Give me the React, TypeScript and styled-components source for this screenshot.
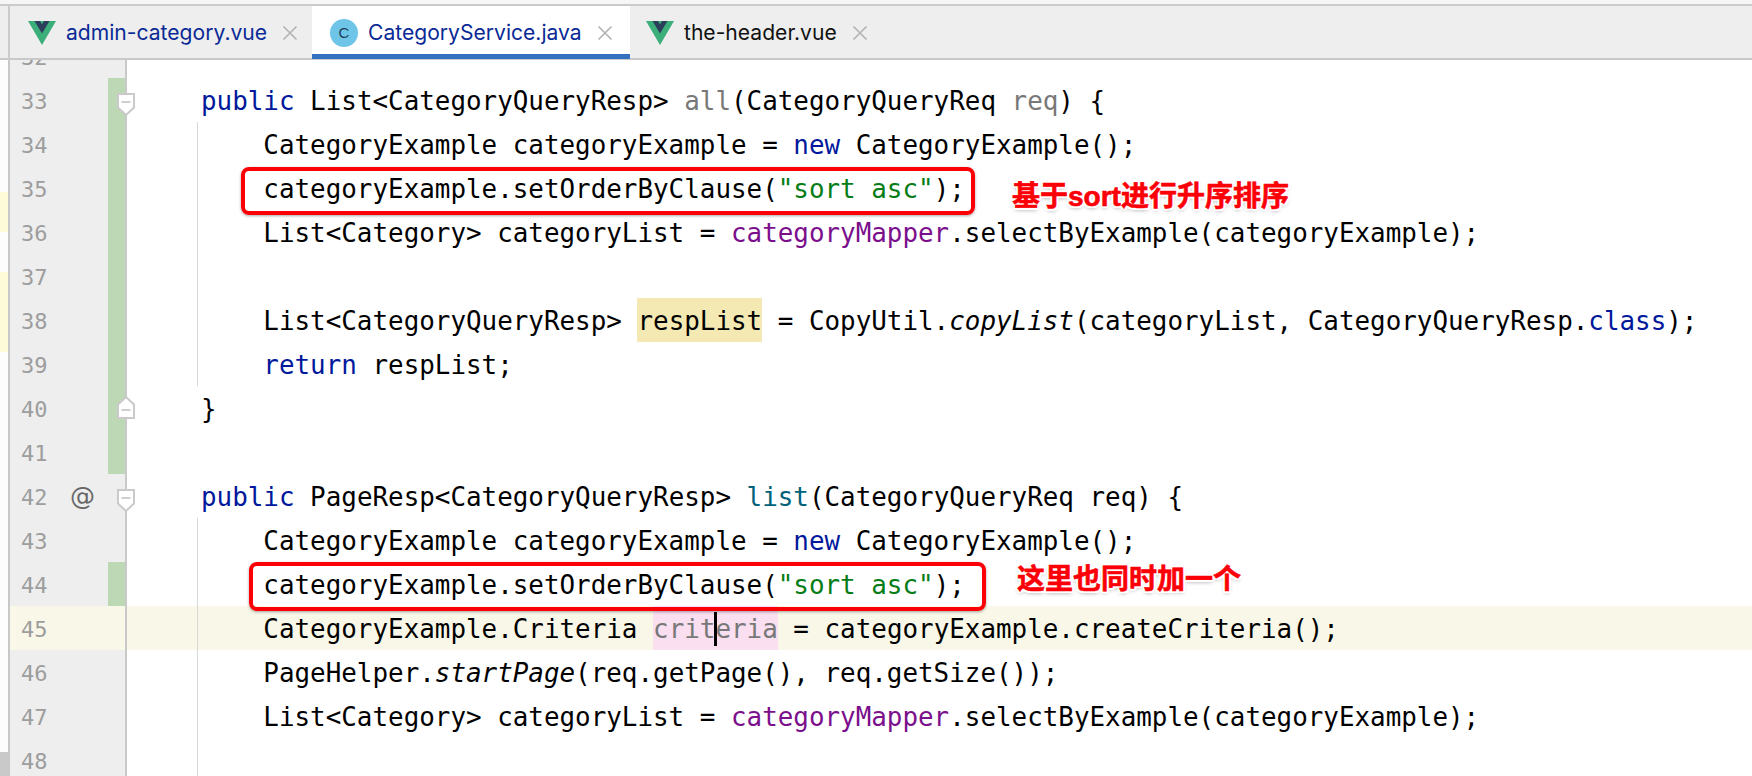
import React from "react";
import styled, { createGlobalStyle } from "styled-components";

const Global = createGlobalStyle`
  html, body { margin: 0; padding: 0; background: #fff; }
  #root { width: 1752px; height: 776px; overflow: hidden; }
`;

const Window = styled.div`
  position: relative;
  width: 1752px;
  height: 776px;
  overflow: hidden;
  display: flex;
  flex-direction: column;
  background: #fff;
`;
const TopStrip = styled.div`
  box-sizing: border-box;
  height: 6px;
  background: #f6f6f6;
  border-bottom: 2px solid #cbcbcb;
  flex: none;
`;
const TabBar = styled.div`
  box-sizing: border-box;
  height: 54px;
  flex: none;
  display: flex;
  background: #eeeeee;
  border-bottom: 2px solid #c9c9c9;
  padding-left: 8px;
  font-family: Inter, "Liberation Sans", sans-serif;
`;
const Tab = styled.div<{ $active?: boolean; $w: number; $pad: number; $first?: boolean }>`
  box-sizing: border-box;
  width: ${(p) => p.$w}px;
  height: 53px;
  display: flex;
  align-items: center;
  padding-left: ${(p) => p.$pad}px;
  background: ${(p) => (p.$active ? "#fff" : "transparent")};
  box-shadow: ${(p) => (p.$active ? "inset 0 -5px 0 #3470c0" : "none")};
  border-left: ${(p) => (p.$first ? "2px solid #cbcbcb" : "none")};
`;
const TabName = styled.span<{ $plain?: boolean }>`
  font-size: 21.1px;
  color: ${(p) => (p.$plain ? "#111" : "#0a2a96")};
  margin-left: 10px;
  white-space: nowrap;
`;
const CloseIcon = styled.svg`
  width: 16px;
  height: 16px;
  margin-left: 15px;
  flex: none;
`;
const ClassBadge = styled.span`
  width: 28px;
  height: 28px;
  border-radius: 50%;
  background: #6fc5e8;
  color: #1d3f5a;
  font-size: 15px;
  display: flex;
  align-items: center;
  justify-content: center;
  flex: none;
  font-family: "Liberation Sans", sans-serif;
`;
const Editor = styled.div`
  flex: 1;
  min-height: 0;
  overflow: hidden;
  display: flex;
`;
const ErrorStrip = styled.div`
  box-sizing: border-box;
  width: 10px;
  flex: none;
  background: #fdfdfd;
  border-right: 2px solid #c8c8c8;
  padding-top: 132px;
  display: flex;
  flex-direction: column;
`;
const StripMark = styled.span<{ $h: number; $gap?: number; $color: string }>`
  display: block;
  flex: none;
  height: ${(p) => p.$h}px;
  margin-bottom: ${(p) => p.$gap || 0}px;
  background: ${(p) => p.$color};
`;
const Lines = styled.div`
  flex: 1;
  min-width: 0;
  display: flex;
  flex-direction: column;
`;
const Row = styled.div<{ $first?: boolean }>`
  display: flex;
  flex: none;
  height: 44px;
  margin-top: ${(p) => (p.$first ? "-26px" : "0")};
`;
const Gutter = styled.div<{ $current?: boolean }>`
  box-sizing: border-box;
  position: relative;
  width: 117px;
  flex: none;
  display: flex;
  align-items: center;
  background: ${(p) => (p.$current ? "#f9f8e8" : "#eeeeee")};
  border-right: 2px solid #c9c9c9;
`;
const LineNo = styled.span`
  width: 47px;
  padding: 2px 0 0 11px;
  box-sizing: border-box;
  font: 22px "DejaVu Sans Mono", monospace;
  color: #9d9d9d;
  flex: none;
`;
const Override = styled.span`
  margin-left: 13px;
  font: 25px "DejaVu Sans", sans-serif;
  color: #666;
  flex: none;
`;
const ChangeBar = styled.span<{ $on?: boolean }>`
  position: absolute;
  right: 0;
  top: 0;
  bottom: 0;
  width: 17px;
  background: ${(p) => (p.$on ? "#bcd8b4" : "transparent")};
`;
const Fold = styled.svg<{ $up?: boolean }>`
  position: absolute;
  left: 107px;
  top: ${(p) => (p.$up ? 10 : 15)}px;
  width: 18px;
  height: 23px;
  z-index: 1;
`;
const Code = styled.div<{ $current?: boolean }>`
  flex: 1;
  display: flex;
  background: ${(p) => (p.$current ? "#f9f8e8" : "#fff")};
`;
const Indent = styled.span<{ $guide?: boolean }>`
  box-sizing: border-box;
  flex: none;
  width: 71px;
  border-right: 1px solid ${(p) => (p.$guide ? "#d8d8d8" : "transparent")};
`;
const Text = styled.pre`
  margin: 0 0 0 3px;
  font: 25.9px/46px "DejaVu Sans Mono", monospace;
  color: #000;
  white-space: pre;
`;
const Kw = styled.span`color: #00189c;`;
const Str = styled.span`color: #067d17;`;
const Field = styled.span`color: #7b0f8c;`;
const Unused = styled.span`color: #787878;`;
const Method = styled.span`color: #00627a;`;
const It = styled.span`font-style: italic;`;
const Mark = styled.span<{ $bg: string; $fg?: string }>`
  display: inline-block;
  height: 44px;
  vertical-align: top;
  background: ${(p) => p.$bg};
  color: ${(p) => p.$fg || "inherit"};
`;
const Caret = styled.span`
  display: inline-block;
  width: 3px;
  height: 34px;
  margin: 6px -2px 0 -1px;
  vertical-align: top;
  background: #000;
`;
const RedBox = styled.div<{ $x: number; $y: number; $w: number; $h: number }>`
  position: absolute;
  box-sizing: border-box;
  left: ${(p) => p.$x}px;
  top: ${(p) => p.$y}px;
  width: ${(p) => p.$w}px;
  height: ${(p) => p.$h}px;
  border: 4px solid #fb0007;
  border-radius: 8px;
  box-shadow: 0 1px 3px rgba(0, 0, 0, 0.35);
`;
const Note = styled.div<{ $x: number; $y: number; $size: number }>`
  position: absolute;
  left: ${(p) => p.$x}px;
  top: ${(p) => p.$y}px;
  font: 700 ${(p) => p.$size}px/1.2 "Liberation Sans", "Noto Sans CJK SC", sans-serif;
  color: #fb0007;
  -webkit-text-stroke: 0.6px #fb0007;
  white-space: nowrap;
  text-shadow: 2px 0 0 #fff, -2px 0 0 #fff, 0 2px 0 #fff, 0 -2px 0 #fff, 2px 2px 0 #fff, -2px 2px 0 #fff,
    2px -2px 0 #fff, -2px -2px 0 #fff, 0 2px 4px rgba(0, 0, 0, 0.4);
`;

const VueIcon = () => (
  <svg width="28" height="24" viewBox="0 0 28 24" style={{ flex: "none" }}>
    <path d="M0 0h28L14 24z" fill="#3bae7a" />
    <path d="M6.5 0h5.5L14 3.5 16 0h5.5L14 12.5z" fill="#2c3e5c" />
  </svg>
);
const Close = () => (
  <CloseIcon viewBox="0 0 16 16">
    <path d="M1.5 1.5l13 13M14.5 1.5l-13 13" stroke="#b4b4b4" strokeWidth="1.7" fill="none" />
  </CloseIcon>
);
const FoldMark = ({ up }: { up?: boolean }) => (
  <Fold viewBox="0 0 18 23" $up={up}>
    <path
      d={up ? "M1 22h16V8.5L9 1 1 8.5z" : "M1 1h16V14.5L9 22 1 14.5z"}
      fill="#fff"
      stroke="#cacaca"
      strokeWidth="2"
    />
    <path d={up ? "M4.5 14h9" : "M4.5 9h9"} stroke="#c4c4c4" strokeWidth="1.6" />
  </Fold>
);

type L = {
  n: number;
  code?: React.ReactNode;
  guide?: boolean;
  green?: boolean;
  current?: boolean;
  at?: boolean;
  fold?: "down" | "up";
};

const lines: L[] = [
  { n: 32 },
  {
    n: 33, green: true, fold: "down",
    code: (<><Kw>public</Kw> List&lt;CategoryQueryResp&gt; <Unused>all</Unused>(CategoryQueryReq <Unused>req</Unused>) {"{"}</>),
  },
  { n: 34, green: true, guide: true, code: (<>    CategoryExample categoryExample = <Kw>new</Kw> CategoryExample();</>) },
  { n: 35, green: true, guide: true, code: (<>    categoryExample.setOrderByClause(<Str>"sort asc"</Str>);</>) },
  { n: 36, green: true, guide: true, code: (<>    List&lt;Category&gt; categoryList = <Field>categoryMapper</Field>.selectByExample(categoryExample);</>) },
  { n: 37, green: true, guide: true },
  {
    n: 38, green: true, guide: true,
    code: (<>    List&lt;CategoryQueryResp&gt; <Mark $bg="#f4e8b3">respList</Mark> = CopyUtil.<It>copyList</It>(categoryList, CategoryQueryResp.<Kw>class</Kw>);</>),
  },
  { n: 39, green: true, guide: true, code: (<>    <Kw>return</Kw> respList;</>) },
  { n: 40, green: true, fold: "up", code: <>{"}"}</> },
  { n: 41, green: true },
  {
    n: 42, at: true, fold: "down",
    code: (<><Kw>public</Kw> PageResp&lt;CategoryQueryResp&gt; <Method>list</Method>(CategoryQueryReq req) {"{"}</>),
  },
  { n: 43, guide: true, code: (<>    CategoryExample categoryExample = <Kw>new</Kw> CategoryExample();</>) },
  { n: 44, green: true, guide: true, code: (<>    categoryExample.setOrderByClause(<Str>"sort asc"</Str>);</>) },
  {
    n: 45, guide: true, current: true,
    code: (<>    CategoryExample.Criteria <Mark $bg="#f9dff0" $fg="#787878">crit<Caret />eria</Mark> = categoryExample.createCriteria();</>),
  },
  { n: 46, guide: true, code: (<>    PageHelper.<It>startPage</It>(req.getPage(), req.getSize());</>) },
  { n: 47, guide: true, code: (<>    List&lt;Category&gt; categoryList = <Field>categoryMapper</Field>.selectByExample(categoryExample);</>) },
  { n: 48, guide: true },
];

export default function App() {
  return (
    <Window>
      <Global />
      <TopStrip />
      <TabBar>
        <Tab $first $w={304} $pad={18}>
          <VueIcon />
          <TabName>admin-category.vue</TabName>
          <Close />
        </Tab>
        <Tab $active $w={318} $pad={18}>
          <ClassBadge>C</ClassBadge>
          <TabName>CategoryService.java</TabName>
          <Close />
        </Tab>
        <Tab $w={300} $pad={16}>
          <VueIcon />
          <TabName $plain>the-header.vue</TabName>
          <Close />
        </Tab>
      </TabBar>
      <Editor>
        <ErrorStrip>
          <StripMark $h={40} $gap={40} $color="#fdfbd8" />
          <StripMark $h={80} $gap={400} $color="#fdfbd8" />
          <StripMark $h={24} $color="#c9c9c9" />
        </ErrorStrip>
        <Lines>
          {lines.map((l, i) => (
            <Row key={l.n} $first={i === 0}>
              <Gutter $current={l.current}>
                <LineNo>{l.n}</LineNo>
                {l.at && <Override>@</Override>}
                <ChangeBar $on={l.green} />
                {l.fold && <FoldMark up={l.fold === "up"} />}
              </Gutter>
              <Code $current={l.current}>
                <Indent $guide={l.guide} />
                <Text>{l.code}</Text>
              </Code>
            </Row>
          ))}
        </Lines>
      </Editor>
      <RedBox $x={241} $y={167} $w={734} $h={48} />
      <RedBox $x={249} $y={562} $w={737} $h={49} />
      <Note $x={1012} $y={180} $size={28}>基于sort进行升序排序</Note>
      <Note $x={1017} $y={563} $size={28}>这里也同时加一个</Note>
    </Window>
  );
}
